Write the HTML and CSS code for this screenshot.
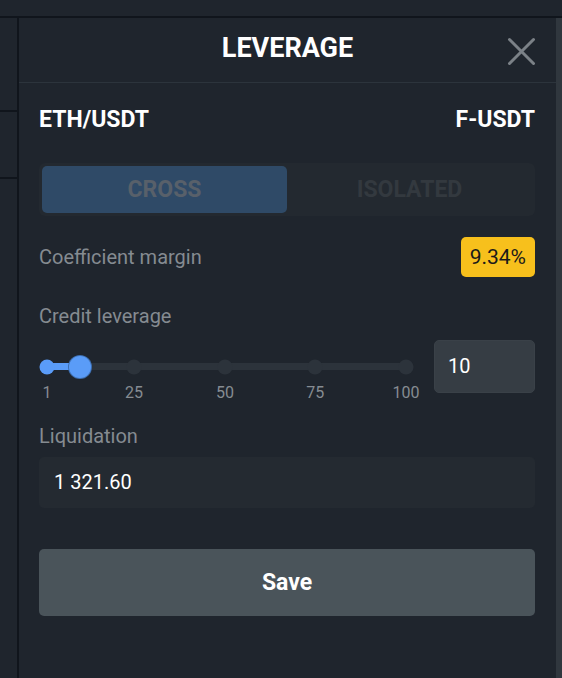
FILE: index.html
```html
<!DOCTYPE html>
<html lang="en">
<head>
<meta charset="utf-8">
<title>Leverage</title>
<link rel="stylesheet" href="styles.css">
</head>
<body>
<div class="topbar"></div>
<div class="layout">
  <aside class="side">
    <div class="side-cell c1"></div>
    <div class="side-cell c2"></div>
    <div class="side-cell c3"></div>
  </aside>
  <section class="modal">
    <header class="modal-head">
      <span></span>
      <h1 class="title">LEVERAGE</h1>
      <button class="close" aria-label="Close">
        <svg width="29" height="29" viewBox="0 0 29 29"><path d="M2.5 2.5 L26.5 26.5 M26.5 2.5 L2.5 26.5" stroke="#7b8187" stroke-width="3" stroke-linecap="round" fill="none"/></svg>
      </button>
    </header>
    <div class="modal-body">
      <div class="pair"><span>ETH/USDT</span><span>F-USDT</span></div>
      <div class="segment">
        <button class="seg active">CROSS</button>
        <button class="seg">ISOLATED</button>
      </div>
      <div class="coef">
        <span class="label">Coefficient margin</span>
        <span class="badge">9.34%</span>
      </div>
      <div class="label credit">Credit leverage</div>
      <div class="lev-row">
        <div class="slider">
          <div class="track">
            <div class="fill" style="width:9.09%"></div>
            <span class="dot on" style="left:0%"></span>
            <span class="dot" style="left:24.2%"></span>
            <span class="dot" style="left:49.6%"></span>
            <span class="dot" style="left:74.7%"></span>
            <span class="dot" style="left:100%"></span>
            <span class="thumb" style="left:9.09%"></span>
          </div>
          <div class="ticks">
            <span style="left:0%">1</span>
            <span style="left:24.2%">25</span>
            <span style="left:49.6%">50</span>
            <span style="left:74.7%">75</span>
            <span style="left:100%">100</span>
          </div>
        </div>
        <div class="lev-input">10</div>
      </div>
      <div class="label liq">Liquidation</div>
      <div class="liq-box">1 321.60</div>
      <button class="save">Save</button>
    </div>
  </section>
  <div class="scrollbar"></div>
</div>
</body>
</html>
```

FILE: styles.css
```css
* { box-sizing: border-box; }
html, body {
  margin: 0;
  padding: 0;
  background: #1f252d;
  font-family: Roboto, "Liberation Sans", sans-serif;
  color: #ffffff;
  height: 100%;
  overflow: hidden;
}
.topbar {
  height: 18px;
  border-bottom: 2px solid #10151c;
}
.layout {
  display: flex;
  height: calc(100% - 18px);
}
.side {
  width: 19px;
  border-right: 2px solid #10151c;
  display: flex;
  flex-direction: column;
}
.side-cell { border-bottom: 2px solid #10151c; }
.side-cell.c1 { height: 94px; }
.side-cell.c2 { height: 67px; }
.side-cell.c3 { flex: 1; border-bottom: none; }
.modal {
  width: 537px;
  display: flex;
  flex-direction: column;
}
.scrollbar {
  flex: 1;
  background: #30373e;
}
.modal-head {
  height: 65px;
  border-bottom: 1px solid #2c343c;
  display: grid;
  grid-template-columns: 1fr auto 1fr;
  align-items: center;
  padding: 0 20px 3px 20px;
}
.title {
  margin: 0;
  font-size: 27px;
  line-height: 33px;
  font-weight: 700;
  letter-spacing: 0;
}
.close {
  justify-self: end;
  background: none;
  border: none;
  padding: 0;
  margin-top: 6px;
  width: 29px;
  height: 29px;
  display: block;
}
.close svg { display: block; }
.modal-body {
  padding: 23px 21px 0 20px;
  display: flex;
  flex-direction: column;
}
.pair {
  display: flex;
  justify-content: space-between;
  font-size: 23px;
  line-height: 27px;
  font-weight: 700;
}
.segment {
  margin-top: 30px;
  height: 53px;
  display: grid;
  grid-template-columns: 1fr 1fr;
  padding: 3px;
  background: #232930;
  border-radius: 6px;
}
.seg {
  border: none;
  background: transparent;
  font-family: Roboto, "Liberation Sans", sans-serif;
  font-size: 23px;
  font-weight: 700;
  color: #33393f;
  border-radius: 5px;
  padding: 0;
}
.seg.active {
  background: #2f4a67;
  color: #58606a;
}
.coef {
  margin-top: 21px;
  display: flex;
  justify-content: space-between;
  align-items: center;
  height: 40px;
}
.label {
  font-size: 20px;
  line-height: 24px;
  color: #858b91;
}
.badge {
  background: #f7c01c;
  color: #1a1a1a;
  font-size: 21px;
  height: 40px;
  line-height: 40px;
  padding: 0 9px;
  border-radius: 5px;
}
.credit { margin-top: 27px; }
.lev-row {
  margin-top: 12px;
  display: flex;
  align-items: flex-start;
  gap: 14px;
}
.slider {
  flex: 1;
  position: relative;
  height: 53px;
  display: flex;
  align-items: center;
  padding: 0 14px 0 8px;
}
.track {
  position: relative;
  flex: 1;
  height: 7px;
  background: #2c333b;
}
.fill {
  position: absolute;
  left: 0;
  top: 0;
  bottom: 0;
  background: #5a9cf8;
}
.dot {
  position: absolute;
  top: 50%;
  width: 15px;
  height: 15px;
  border-radius: 50%;
  background: #2c333b;
  transform: translate(-50%, -50%);
}
.dot.on { background: #5a9cf8; }
.thumb {
  position: absolute;
  top: 50%;
  width: 22px;
  height: 22px;
  border-radius: 50%;
  background: #5a9cf8;
  box-shadow: 0 0 0 1px #3e6fb0;
  transform: translate(-50%, -50%);
}
.ticks {
  position: absolute;
  top: 43px;
  left: 8px;
  right: 14px;
  height: 19px;
}
.ticks span {
  position: absolute;
  top: 0;
  transform: translateX(-50%);
  font-size: 16px;
  line-height: 19px;
  color: #868c92;
}
.lev-input {
  width: 101px;
  height: 53px;
  background: #363d44;
  border: 1px solid #3a4148;
  border-radius: 5px;
  font-size: 20px;
  line-height: 51px;
  padding-left: 13px;
}
.liq { margin-top: 31px; }
.liq-box {
  margin-top: 9px;
  height: 51px;
  background: #242a31;
  border-radius: 5px;
  font-size: 20px;
  line-height: 51px;
  padding-left: 15px;
}
.save {
  margin-top: 41px;
  height: 67px;
  border: none;
  border-radius: 5px;
  background: #4a545a;
  color: #ffffff;
  font-family: Roboto, "Liberation Sans", sans-serif;
  font-size: 23px;
  font-weight: 700;
  padding: 0;
}
```
